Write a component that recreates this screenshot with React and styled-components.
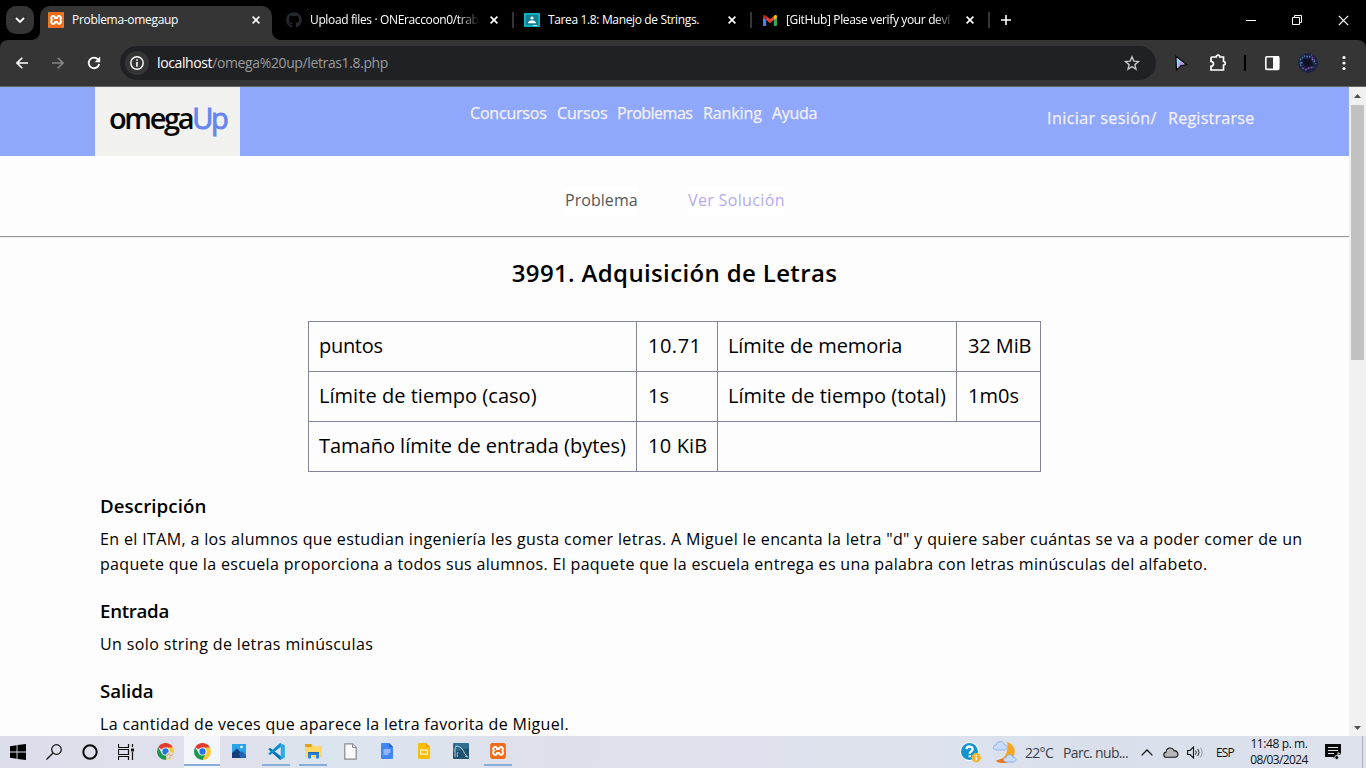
import React from "react";
import styled, { createGlobalStyle, css } from "styled-components";
import { FaGithub } from "react-icons/fa";
import { SiXampp } from "react-icons/si";

const Global = createGlobalStyle`
  * { box-sizing: border-box; }
  body { margin: 0; background: #000; overflow: hidden; }
  svg { display: block; flex: none; }
`;

const uiFont = css`font-family: "Open Sans", "Noto Sans", sans-serif;`;

const Screen = styled.div`
  width: 1366px;
  height: 768px;
  display: flex;
  flex-direction: column;
  overflow: hidden;
  ${uiFont}
`;

/* ---------- tab strip ---------- */
const TabStrip = styled.div`
  height: 40px;
  flex: none;
  display: flex;
  background: #000;
  color: #fff;
`;
const TabSearch = styled.div`
  width: 28px;
  height: 28px;
  margin: 6px 6px 0;
  border-radius: 10px;
  background: #353535;
  display: grid;
  place-items: center;
`;
const Tab = styled.div`
  position: relative;
  width: ${(p) => p.$w}px;
  flex: none;
  height: 34px;
  margin-top: 6px;
  padding: 0 0 6px ${(p) => (p.$active ? 8 : 10)}px;
  display: flex;
  align-items: center;
  font-size: 12px;
  border-radius: 10px 10px 0 0;
  background: ${(p) => (p.$active ? "#353535" : "transparent")};
  ${(p) => p.$active && css`
    &::before, &::after {
      content: "";
      position: absolute;
      bottom: 0;
      width: 8px;
      height: 8px;
    }
    &::before { left: -8px; background: radial-gradient(circle at 0 0, transparent 7.5px, #353535 8px); }
    &::after { right: -8px; background: radial-gradient(circle at 100% 0, transparent 7.5px, #353535 8px); }
  `}
`;
const Favicon = styled.div`
  width: 16px;
  height: 16px;
  flex: none;
  margin-right: 8px;
  display: grid;
  place-items: center;
`;
const TabTitle = styled.span`
  width: 168px;
  flex: none;
  overflow: hidden;
  white-space: nowrap;
  line-height: 20px;
  letter-spacing: ${(p) => p.$ls}px;
  ${(p) => p.$fade && css`mask-image: linear-gradient(90deg, #000 88%, transparent 101%);`}
`;
const CloseSlot = styled.div`
  margin-left: 12px;
`;
const Divider = styled.div`
  width: 2px;
  height: 16px;
  margin-top: 12px;
  background: #353535;
`;
const Spacer = styled.div`
  width: 4px;
`;
const NewTab = styled.div`
  margin: 15px 0 0 11px;
`;
const WindowButtons = styled.div`
  margin-left: auto;
  height: 40px;
  display: flex;
`;
const WindowButton = styled.div`
  width: 46px;
  display: grid;
  place-items: center;
`;

/* ---------- toolbar ---------- */
const Toolbar = styled.div`
  height: 47px;
  flex: none;
  display: flex;
  align-items: center;
  padding-left: 8px;
  background: #353535;
  border-radius: 8px 8px 0 0;
  border-bottom: 1px solid #666;
`;
const NavButton = styled.div`
  width: 28px;
  height: 28px;
  margin-right: 8px;
  display: grid;
  place-items: center;
`;
const AddressBar = styled.div`
  width: 1036px;
  height: 34px;
  margin-left: 4px;
  padding: 0 16px 0 5px;
  border-radius: 17px;
  background: #202124;
  display: flex;
  align-items: center;
  justify-content: space-between;
`;
const AddressLeft = styled.div`
  display: flex;
  align-items: center;
`;
const InfoBadge = styled.div`
  width: 24px;
  height: 24px;
  border-radius: 50%;
  background: #353535;
  display: grid;
  place-items: center;
  margin-right: 8px;
`;
const Url = styled.span`
  font-size: 14px;
  line-height: 18px;
  padding-bottom: 1px;
  letter-spacing: -0.38px;
  color: #9a9b9d;
  white-space: nowrap;
  b { font-weight: 400; color: #fff; }
`;
const Actions = styled.div`
  display: flex;
  align-items: center;
  padding-left: 18px;
`;
const Action = styled.div`
  margin-right: ${(p) => p.$mr}px;
`;
const ActionBar = styled.div`
  width: 2px;
  height: 16px;
  background: #000;
`;

/* ---------- page ---------- */
const Viewport = styled.div`
  height: 649px;
  flex: none;
  display: flex;
  background: #fdfdfd;
`;
const Page = styled.div`
  width: 1349px;
  height: 649px;
  overflow: hidden;
  color: #000;
`;
const SiteHeader = styled.header`
  height: 69px;
  display: flex;
  background: #8fa8fb;
  color: #f3f0fb;
  font-size: 16px;
`;
const Logo = styled.div`
  width: 145px;
  height: 69px;
  margin-left: 95px;
  padding: 9px 0 0 14px;
  background: #f1f1ef;
  font: 600 29px/44px "Open Sans", sans-serif;
  letter-spacing: -2.35px;
  color: #060606;
  white-space: nowrap;
  span {
    color: #6685f0;
    font-weight: 400;
    -webkit-text-stroke: 0.9px #6685f0;
  }
`;
const SiteNav = styled.nav`
  display: flex;
  margin-left: 230px;
  padding-top: 14px;
  width: 577px;
`;
const SiteLink = styled.a`
  width: ${(p) => p.$w}px;
  flex: none;
  line-height: 25px;
  white-space: nowrap;
  letter-spacing: ${(p) => p.$ls || 0}px;
  -webkit-text-stroke: 0.25px #f3f0fb;
`;
const Account = styled.div`
  display: flex;
  padding-top: 19px;
`;
const SubNav = styled.div`
  height: 80px;
  display: flex;
  padding: 31px 0 0 565px;
  font-size: 16px;
`;
const SubLink = styled.a`
  height: 29px;
  line-height: 27px;
  margin-right: 50px;
  background: #fff;
  white-space: nowrap;
  width: ${(p) => p.$w}px;
  letter-spacing: ${(p) => p.$ls}px;
  color: ${(p) => p.$color};
`;
const Rule = styled.div`
  height: 2px;
  background: #eee;
  border-top: 1px solid #989898;
`;
const Title = styled.h1`
  margin: 17px 0 0;
  text-align: center;
  font-size: 24px;
  line-height: 36px;
  font-weight: 600;
  letter-spacing: 0.36px;
`;
const Limits = styled.table`
  margin: 30px 0 0 308px;
  width: 733px;
  table-layout: fixed;
  border-collapse: collapse;
  font-size: 20px;
  td {
    height: 50px;
    padding: 0 0 2px 10px;
    border: 1px solid #84849a;
    white-space: nowrap;
    line-height: 30px;
  }
  td:nth-child(even) { padding-left: 11px; }
`;
const Cell = styled.span`
  letter-spacing: ${(p) => p.$ls}px;
`;
const Sections = styled.div`
  padding: 21px 0 0 100px;
`;
const Section = styled.section`
  margin-bottom: 21px;
`;
const SectionTitle = styled.h3`
  margin: 0 0 9px;
  font-size: 18.7px;
  font-weight: 600;
  line-height: 25px;
  letter-spacing: ${(p) => p.$ls}px;
`;
const Line = styled.div`
  font-size: 16px;
  line-height: 25px;
  white-space: nowrap;
  letter-spacing: ${(p) => p.$ls}px;
`;
const Scrollbar = styled.div`
  width: 17px;
  background: #f1f1f1;
  display: flex;
  flex-direction: column;
  align-items: center;
`;
const Arrow = styled.div`
  height: 17px;
  display: grid;
  place-items: center;
`;
const Thumb = styled.div`
  width: 13px;
  height: 255px;
  margin: 1px 0 auto;
  background: #c1c1c1;
`;

/* ---------- taskbar ---------- */
const Taskbar = styled.div`
  height: 32px;
  flex: none;
  display: flex;
  background: linear-gradient(90deg, #dcdfeb 0, #dfe0eb 240px, #dbe5ef 330px, #dde2ed 450px, #dedfeb 560px, #dde2ed 900px, #d9e0ec 1100px, #dde1ec 100%);
  color: #111;
`;
const SystemSlot = styled.div`
  width: 36px;
  height: 32px;
  display: grid;
  place-items: center;
`;
const Apps = styled.div`
  display: flex;
  gap: 1px;
  padding-left: 3px;
`;
const AppSlot = styled.div`
  width: 36px;
  height: 32px;
  display: flex;
  flex-direction: column;
  align-items: center;
  justify-content: space-between;
  padding: 7px 0 2px;
  background: ${(p) => (p.$active ? "#f2f5f9" : "transparent")};
  &::after {
    content: "";
    width: ${(p) => (p.$active ? 36 : 28)}px;
    height: 2px;
    background: ${(p) => (p.$open || p.$active ? "#86aed8" : "transparent")};
  }
`;
const Tray = styled.div`
  margin-left: auto;
  width: 406px;
  display: flex;
  align-items: center;
  font-size: 12px;
`;
const TrayItem = styled.div`
  width: ${(p) => p.$w}px;
  margin-right: ${(p) => p.$mr || 0}px;
  flex: none;
  white-space: nowrap;
  font-size: ${(p) => p.$size || 12}px;
  letter-spacing: ${(p) => p.$ls || 0}px;
  color: ${(p) => p.$color || "#111"};
`;
const Clock = styled.div`
  width: 60px;
  margin-right: 16px;
  text-align: center;
  font-size: 12px;
  line-height: 16px;
  white-space: nowrap;
`;
const ClockRow = styled.div`
  letter-spacing: ${(p) => p.$ls}px;
`;
const ShowDesktop = styled.div`
  width: 1px;
  height: 32px;
  background: #aeb3bd;
  margin-left: 20px;
`;

/* ---------- drawings ---------- */
const Cross = ({ s = 8, w = 1.6 }) => (
  <svg width={s} height={s} viewBox="0 0 8 8"><path d="M.6.6 7.400 7.400M7.400.6.6 7.400" stroke="#fff" strokeWidth={w} /></svg>
);
const XamppBadge = styled.div`
  width: 16px;
  height: 16px;
  border-radius: 2px;
  background: #fff;
  color: #ef6c1a;
  overflow: hidden;
`;
const Xampp = () => <XamppBadge><SiXampp size={16} /></XamppBadge>;
const Classroom = () => (
  <svg width="16" height="14" viewBox="0 0 16 14">
    <rect width="16" height="14" rx="1" fill="#12b3c7" /><rect x="1.800" y="1.800" width="12.400" height="10.400" fill="#12808f" />
    <circle cx="8" cy="5" r="1.600" fill="#fff" /><path d="M4 10.200C4 7.900 6.400 7.400 8 7.400s4 .5 4 2.800z" fill="#fff" /><path d="M9 12h4v1H9z" fill="#b9eaf0" />
  </svg>
);
const Gmail = () => (
  <svg width="14" height="11" viewBox="0 0 14 11">
    <path d="M0 2.200v8Q0 11 .9 11H3.200V4.500z" fill="#4285f4" /><path d="M14 2.200v8q0 .8-.9.800H10.800V4.500z" fill="#34a853" />
    <path d="M3.200 1.200 7 4.100 10.800 1.200V5L7 7.900 3.200 5z" fill="#ea4335" />
    <path d="M0 1.600C0 .2 1.500-.4 2.600.6l.6.6V5L0 2.700z" fill="#c5221f" /><path d="M14 1.600c0-1.400-1.500-2-2.600-1l-.6.6V5L14 2.700z" fill="#fbbc04" />
  </svg>
);
const Chrome = ({ badge }) => (
  <svg width="17" height="17" viewBox="0 0 34 34">
    <path d="M17 17 2.300 8.500A17 17 0 0 1 31.700 8.500z" fill="#e33b2e" />
    <path d="M17 9H31.900A17 17 0 0 1 17 34L24 21z" fill="#fcc934" />
    <path d="M2.300 8.500A17 17 0 0 0 17 34L24 21 10 21z" fill="#1e9650" />
    <circle cx="17" cy="17" r="8" fill="#fff" /><circle cx="17" cy="17" r="6.300" fill="#2374e8" />
    {badge && <g><circle cx="26" cy="26" r="8" fill="#eadbc6" /><path d="M20 26l4-5 3 5 5-3M23 31l5-3" stroke="#b99f85" strokeWidth="1.500" fill="none" /></g>}
  </svg>
);
const Photos = () => (
  <svg width="14" height="15" viewBox="0 0 14 15"><rect y="1" width="14" height="14" fill="#2aa4e6" /><path d="M0 10 5 5.500 14 15H0z" fill="#173f7c" /><path d="M7 10.500 9.800 8 14 12v3H8.500z" fill="#2463b0" /><circle cx="9.500" cy="4" r="1.300" fill="#fff" /></svg>
);
const VsCode = () => (
  <svg width="17" height="17" viewBox="0 0 100 100">
    <path d="M4 36 9 31Q12 29 15 31L76 78V98Q72 101 68 97L4 39Q2 37.500 4 36z" fill="#0072b8" />
    <path d="M4 64 9 69Q12 71 15 69L76 22V2Q72-1 68 3L4 61Q2 62.500 4 64z" fill="#0a8fd4" />
    <path d="M72 2 96 12Q99 13.500 99 17V83q0 3.500-3 5L72 98Q70 99 68 97 75 100 75 92V8Q75 0 68 3q2-2 4-1z" fill="#29a9ec" />
  </svg>
);
const Explorer = () => (
  <svg width="17" height="16" viewBox="0 0 17 16"><path d="M0 1.500Q0 1 .5 1H6l2 2h8.500q.5 0 .5.500V14H0z" fill="#ffd768" /><path d="M0 1.500Q0 1 .5 1H6l1.500 1.500L6 4H0z" fill="#e0a113" /><path d="M3 15.500V9h11v6.500h-3V12H6v3.500z" fill="#2887d8" /><path d="M3 9h11v1.500H3z" fill="#1b6fbd" /></svg>
);
const FilePage = () => (
  <svg width="13" height="17" viewBox="0 0 13 17"><path d="M.8.800H8.500l3.700 3.700v11.700H.8z" fill="#f9f9f9" stroke="#87898c" strokeWidth="1.200" /><path d="M8.500.8v3.700h3.700" fill="#ddd" stroke="#87898c" /></svg>
);
const Docs = () => (
  <svg width="12" height="16" viewBox="0 0 12 16"><path d="M1 0h7l4 4v11q0 1-1 1H1q-1 0-1-1V1q0-1 1-1z" fill="#4285f4" /><path d="M8 0v4h4z" fill="#1d5fd3" /><path d="M2.500 7h7M2.500 9h7M2.500 11h5" stroke="#dce8ff" /></svg>
);
const Slides = () => (
  <svg width="12" height="16" viewBox="0 0 12 16"><path d="M1 0h7l4 4v11q0 1-1 1H1q-1 0-1-1V1q0-1 1-1z" fill="#fbbc04" /><path d="M8 0v4h4z" fill="#f29900" /><path d="M2.600 7.200h6.800v4H2.600z" fill="none" stroke="#fff4cf" strokeWidth="1.200" /></svg>
);
const Workbench = () => (
  <svg width="16" height="16" viewBox="0 0 16 16"><rect width="16" height="16" rx="1" fill="#2f6c8f" /><path d="M0 9 16 5v10q0 1-1 1H1q-1 0-1-1z" fill="#1f506f" /><path d="M2 14V6.500C2 3 4.500 2.500 6 3.500c3 1.500 4.500 4 5.500 7 1 .8 2 1.500 3 3.500l-2.500-1M2.500 3 4 3.500M4.500 14c-.5-2-.5-3.500.5-5" fill="none" stroke="#c5dce6" strokeWidth=".9" /></svg>
);
const Help = () => (
  <svg width="21" height="21" viewBox="0 0 21 21"><circle cx="9.500" cy="9.500" r="9.500" fill="#fff" /><circle cx="9.500" cy="9.500" r="8.500" fill="#1294cf" /><path d="M6.500 7.200c.3-3.700 6.400-3.500 6.100.200-.2 2-2.800 2.200-2.900 4.300M9.700 13.200v2.100" stroke="#fff" strokeWidth="2.300" fill="none" /><circle cx="16.200" cy="15.800" r="4.700" fill="#f9b32c" /><path d="M16.200 13v1.200m0 1v3.300" stroke="#fff" strokeWidth="1.400" /></svg>
);
const Weather = () => (
  <svg width="24" height="23" viewBox="0 0 24 23"><path d="M14 1c8 3 9.500 9.500 6 15.500-4 6-12 7-17 3.500C11 19 16.500 11 14 1z" fill="#f5a623" /><path d="M3 19.800C6 22.500 12 22.500 15 21L9 17.500z" fill="#e87722" /><path d="M3.500 9C-.8 9-.5 4 3.200 4 4-.5 10.500-.500 11 3.600c4.600.200 4 5.400.2 5.400z" fill="#c7dcfb" stroke="#82a8e6" strokeWidth=".8" /><path d="M13.500 21c-4 0-3.500-4.500-.3-4.500.8-3.700 6-3.600 6.600-.300 4.400 0 4 4.800.4 4.800z" fill="#c7dcfb" stroke="#82a8e6" strokeWidth=".8" /></svg>
);

const tabs = [
  { title: "Upload files · ONEraccoon0/trab", icon: <FaGithub size={16} color="#24292f" />, ls: -0.36, fade: true },
  { title: "Tarea 1.8: Manejo de Strings.", icon: <Classroom />, ls: -0.36 },
  { title: "[GitHub] Please verify your devi", icon: <Gmail />, ls: -0.36, fade: true },
];

function Browser() {
  return (
    <>
      <TabStrip>
        <TabSearch><svg width="10" height="6" viewBox="0 0 10 6"><path d="m1 1 4 4 4-4" fill="none" stroke="#fff" strokeWidth="1.800" /></svg></TabSearch>
        <Tab $w={232} $active>
          <Favicon><Xampp /></Favicon>
          <TabTitle $ls={-0.31}>Problema-omegaup</TabTitle>
          <CloseSlot><Cross /></CloseSlot>
        </Tab>
        <Spacer />
        {tabs.map((t) => (
          <React.Fragment key={t.title}>
            <Tab $w={236}>
              <Favicon>{t.icon}</Favicon>
              <TabTitle $ls={t.ls} $fade={t.fade}>{t.title}</TabTitle>
              <CloseSlot><Cross /></CloseSlot>
            </Tab>
            <Divider />
          </React.Fragment>
        ))}
        <NewTab><svg width="10" height="10" viewBox="0 0 10 10"><path d="M5 0v10M0 5h10" stroke="#fff" strokeWidth="1.600" /></svg></NewTab>
        <WindowButtons>
          <WindowButton><svg width="10" height="10" viewBox="0 0 10 10"><path d="M0 5.500h10" stroke="#fff" /></svg></WindowButton>
          <WindowButton><svg width="10" height="10" viewBox="0 0 10 10"><path d="M.5 2.500h7v7h-7zM2.500 2.500v-2h7v7h-2" fill="none" stroke="#fff" /></svg></WindowButton>
          <WindowButton><Cross s={11} w={0.9} /></WindowButton>
        </WindowButtons>
      </TabStrip>
      <Toolbar>
        <NavButton><svg width="12" height="12" viewBox="0 0 12 12"><path d="M12 6H1M6.300.7 1 6l5.300 5.300" fill="none" stroke="#fff" strokeWidth="1.600" /></svg></NavButton>
        <NavButton><svg width="12" height="12" viewBox="0 0 12 12"><path d="M0 6h11M5.700.7 11 6l-5.300 5.300" fill="none" stroke="#858585" strokeWidth="1.600" /></svg></NavButton>
        <NavButton><svg width="14" height="14" viewBox="0 0 14 14"><path d="M12.200 8A5.300 5.300 0 1 1 11 3.400L12.500 5" fill="none" stroke="#fff" strokeWidth="1.800" /><path d="M13.200.6v5.600H7.600z" fill="#fff" /></svg></NavButton>
        <AddressBar>
          <AddressLeft>
            <InfoBadge><svg width="14" height="14" viewBox="0 0 14 14"><circle cx="7" cy="7" r="6.200" fill="none" stroke="#fff" strokeWidth="1.400" /><path d="M7 3.200v1.600M7 6v4.800" stroke="#fff" strokeWidth="1.600" /></svg></InfoBadge>
            <Url><b>localhost</b>/omega%20up/letras1.8.php</Url>
          </AddressLeft>
          <svg width="16" height="16" viewBox="0 0 16 16"><path d="m8 1.800 1.800 4.300 4.700.4-3.600 3.100 1.100 4.600L8 11.700l-4 2.500 1.100-4.600L1.500 6.500l4.700-.4z" fill="none" stroke="#c4c5c7" strokeWidth="1.400" /></svg>
        </AddressBar>
        <Actions>
          <Action $mr={21}><svg width="14" height="16" viewBox="0 0 14 16"><path d="M2 1.500 12.500 9.500 7 10.500 2.500 15z" fill="#eef6ff" stroke="#0b0b12" strokeWidth="1.400" /><path d="M2.800 3 8 7.500 5 12 3 13z" fill="#8fd4f7" /><path d="M6 6.500 10.800 9.300 6.500 10 3.400 13.500z" fill="#b98be8" /></svg></Action>
          <Action $mr={17}><svg width="18" height="18" viewBox="0 0 18 18"><path d="M3 3H7.200a1.800 1.800 0 0 1 3.600 0H14.500V7.500a1.800 1.800 0 0 1 0 3.600V16H2V12.300a2.500 2.500 0 0 0 0-5V4q0-1 1-1z" fill="none" stroke="#fff" strokeWidth="1.700" /></svg></Action>
          <Action $mr={18}><ActionBar /></Action>
          <Action $mr={18}><svg width="16" height="16" viewBox="0 0 16 16"><rect x="1.800" y="1.800" width="13" height="12.600" rx="1" fill="none" stroke="#fff" strokeWidth="1.600" /><path d="M9 1h6v14H9z" fill="#fff" /></svg></Action>
          <Action $mr={24}><svg width="20" height="20" viewBox="0 0 20 20"><circle cx="10" cy="10" r="10" fill="#1b2344" /><path d="M2 7l4-4 5 1 3-2M2.500 13l2-5M14 6l4 5M1.500 10h3" stroke="#4a76a8" strokeWidth="1.600" strokeDasharray="1.500 1.200" fill="none" /><path d="M5 6h7l3 6-6 2-4-3z" fill="#120f22" /><path d="M7 17l4-2 5-1M14 4l3 4M4 15l3 1" stroke="#7b4b97" strokeWidth="1.500" strokeDasharray="2 1" fill="none" /></svg></Action>
          <Action $mr={0}><svg width="4" height="16" viewBox="0 0 4 16"><circle cx="2" cy="2.500" r="1.600" fill="#fff" /><circle cx="2" cy="8" r="1.600" fill="#fff" /><circle cx="2" cy="13.500" r="1.600" fill="#fff" /></svg></Action>
        </Actions>
      </Toolbar>
    </>
  );
}

function Content() {
  return (
    <Viewport>
      <Page>
        <SiteHeader>
          <Logo>omega<span>Up</span></Logo>
          <SiteNav>
            <SiteLink $w={87} $ls={-0.2}>Concursos</SiteLink>
            <SiteLink $w={60} $ls={-0.15}>Cursos</SiteLink>
            <SiteLink $w={86} $ls={-0.5}>Problemas</SiteLink>
            <SiteLink $w={69} $ls={-0.1}>Ranking</SiteLink>
            <SiteLink $w={50} $ls={-0.3}>Ayuda</SiteLink>
          </SiteNav>
          <Account>
            <SiteLink $w={121} $ls={0.45}>Iniciar sesión/</SiteLink>
            <SiteLink $w={90} $ls={0.27}>Registrarse</SiteLink>
          </Account>
        </SiteHeader>
        <SubNav>
          <SubLink $w={73} $ls={0.05} $color="#555">Problema</SubLink>
          <SubLink $w={96} $ls={0.35} $color="#b3a9f2">Ver Solución</SubLink>
        </SubNav>
        <Rule />
        <Title>3991. Adquisición de Letras</Title>
        <Limits>
          <colgroup><col width="328" /><col width="81" /><col width="239" /><col width="84" /></colgroup>
          <tbody>
            <tr><td><Cell $ls={-0.3}>puntos</Cell></td><td><Cell $ls={0.5}>10.71</Cell></td><td><Cell $ls={-0.1}>Límite de memoria</Cell></td><td><Cell $ls={-0.1}>32 MiB</Cell></td></tr>
            <tr><td><Cell $ls={0.04}>Límite de tiempo (caso)</Cell></td><td><Cell $ls={0}>1s</Cell></td><td><Cell $ls={0.04}>Límite de tiempo (total)</Cell></td><td><Cell $ls={0}>1m0s</Cell></td></tr>
            <tr><td><Cell $ls={-0.02}>Tamaño límite de entrada (bytes)</Cell></td><td><Cell $ls={0.2}>10 KiB</Cell></td><td colSpan="2" /></tr>
          </tbody>
        </Limits>
        <Sections>
          <Section>
            <SectionTitle $ls={0.08}>Descripción</SectionTitle>
            <Line $ls={0.357}>En el ITAM, a los alumnos que estudian ingeniería les gusta comer letras. A Miguel le encanta la letra "d" y quiere saber cuántas se va a poder comer de un</Line>
            <Line $ls={0.33}>paquete que la escuela proporciona a todos sus alumnos. El paquete que la escuela entrega es una palabra con letras minúsculas del alfabeto.</Line>
          </Section>
          <Section>
            <SectionTitle $ls={-0.3}>Entrada</SectionTitle>
            <Line $ls={0.37}>Un solo string de letras minúsculas</Line>
          </Section>
          <Section>
            <SectionTitle $ls={-0.1}>Salida</SectionTitle>
            <Line $ls={0.33}>La cantidad de veces que aparece la letra favorita de Miguel.</Line>
          </Section>
        </Sections>
      </Page>
      <Scrollbar>
        <Arrow><svg width="7" height="4" viewBox="0 0 7 4"><path d="M0 4 3.500 0 7 4z" fill="#505050" /></svg></Arrow>
        <Thumb />
        <Arrow><svg width="7" height="4" viewBox="0 0 7 4"><path d="M0 0 3.500 4 7 0z" fill="#505050" /></svg></Arrow>
      </Scrollbar>
    </Viewport>
  );
}

function SystemBar() {
  return (
    <Taskbar>
      <SystemSlot><svg width="16" height="16" viewBox="0 0 16 16"><path d="M0 2.200 6.600 1.200V7.500H0zM7.500 1 16 0v7.500H7.500zM0 8.500h6.600v6.300L0 13.800zM7.500 8.500H16V16l-8.500-1z" fill="#000" /></svg></SystemSlot>
      <SystemSlot><svg width="16" height="16" viewBox="0 0 16 16"><circle cx="10.500" cy="5.500" r="4.800" fill="none" stroke="#111" strokeWidth="1.200" /><path d="m7 9-6.500 6.500" stroke="#111" strokeWidth="1.300" /></svg></SystemSlot>
      <SystemSlot><svg width="16" height="16" viewBox="0 0 16 16"><circle cx="8" cy="8" r="6.700" fill="none" stroke="#0a0a0a" strokeWidth="2" /></svg></SystemSlot>
      <SystemSlot><svg width="16" height="16" viewBox="0 0 16 16"><path d="M.5 0v3.500h10V0M.5 16v-3.500h10V16M.5 5.500h10v5H.5zM14.500 0v3M14.500 8v8" fill="none" stroke="#111" strokeWidth="1.200" /><path d="M13 4.500h3v3h-3z" fill="#111" /></svg></SystemSlot>
      <Apps>
        <AppSlot><Chrome badge /></AppSlot>
        <AppSlot $active><Chrome /></AppSlot>
        <AppSlot><Photos /></AppSlot>
        <AppSlot $open><VsCode /></AppSlot>
        <AppSlot $open><Explorer /></AppSlot>
        <AppSlot><FilePage /></AppSlot>
        <AppSlot><Docs /></AppSlot>
        <AppSlot><Slides /></AppSlot>
        <AppSlot><Workbench /></AppSlot>
        <AppSlot $open><Xampp /></AppSlot>
      </Apps>
      <Tray>
        <TrayItem $w={21} $mr={12}><Help /></TrayItem>
        <TrayItem $w={24} $mr={8}><Weather /></TrayItem>
        <TrayItem $w={30} $mr={8} $size={14} $ls={-0.7} $color="#3a3f47">22°C</TrayItem>
        <TrayItem $w={66} $mr={12} $size={14} $ls={-0.65} $color="#3a3f47">Parc. nub...</TrayItem>
        <TrayItem $w={12} $mr={10}><svg width="12" height="7" viewBox="0 0 12 7"><path d="m.6 6.400 5.400-5.400 5.400 5.400" fill="none" stroke="#111" strokeWidth="1.300" /></svg></TrayItem>
        <TrayItem $w={16} $mr={8}><svg width="16" height="11" viewBox="0 0 16 11"><path d="M3.500 10.300C0 10.300 0 5.600 3 5.300 3.500.5 9-.600 11 3.600c4.500 0 5.500 6.700 1 6.700z" fill="#b6b7b9" stroke="#111" strokeWidth="1.100" /></svg></TrayItem>
        <TrayItem $w={17} $mr={12}><svg width="17" height="13" viewBox="0 0 17 13"><path d="M.6 4.500H3L6.500 1v11L3 8.500H.6z" fill="none" stroke="#111" strokeWidth="1.100" /><path d="M8.500 4.500q1.500 2 0 4M10.800 3q2.500 3.500 0 7" fill="none" stroke="#222" /><path d="M13.200 1.500q4 5 0 10" fill="none" stroke="#999" /></svg></TrayItem>
        <TrayItem $w={19} $mr={14} $ls={-0.9}>ESP</TrayItem>
        <Clock><ClockRow $ls={-0.4}>11:48 p. m.</ClockRow><ClockRow $ls={-0.6}>08/03/2024</ClockRow></Clock>
        <svg width="17" height="17" viewBox="0 0 17 17"><path d="M0 0h16v11h-4v5l-4-3H0z" fill="#0a0a0a" /><path d="M3 3.500h10M3 6.500h10M3 9.500h6" stroke="#dfe3ed" strokeWidth="1.100" /><path d="M13 8.500v5M13 9l3 1.500" stroke="#dfe3ed" /><circle cx="11.800" cy="13.500" r="2" fill="#0a0a0a" stroke="#dfe3ed" /></svg>
        <ShowDesktop />
      </Tray>
    </Taskbar>
  );
}

export default function App() {
  return (
    <Screen>
      <Global />
      <Browser />
      <Content />
      <SystemBar />
    </Screen>
  );
}
